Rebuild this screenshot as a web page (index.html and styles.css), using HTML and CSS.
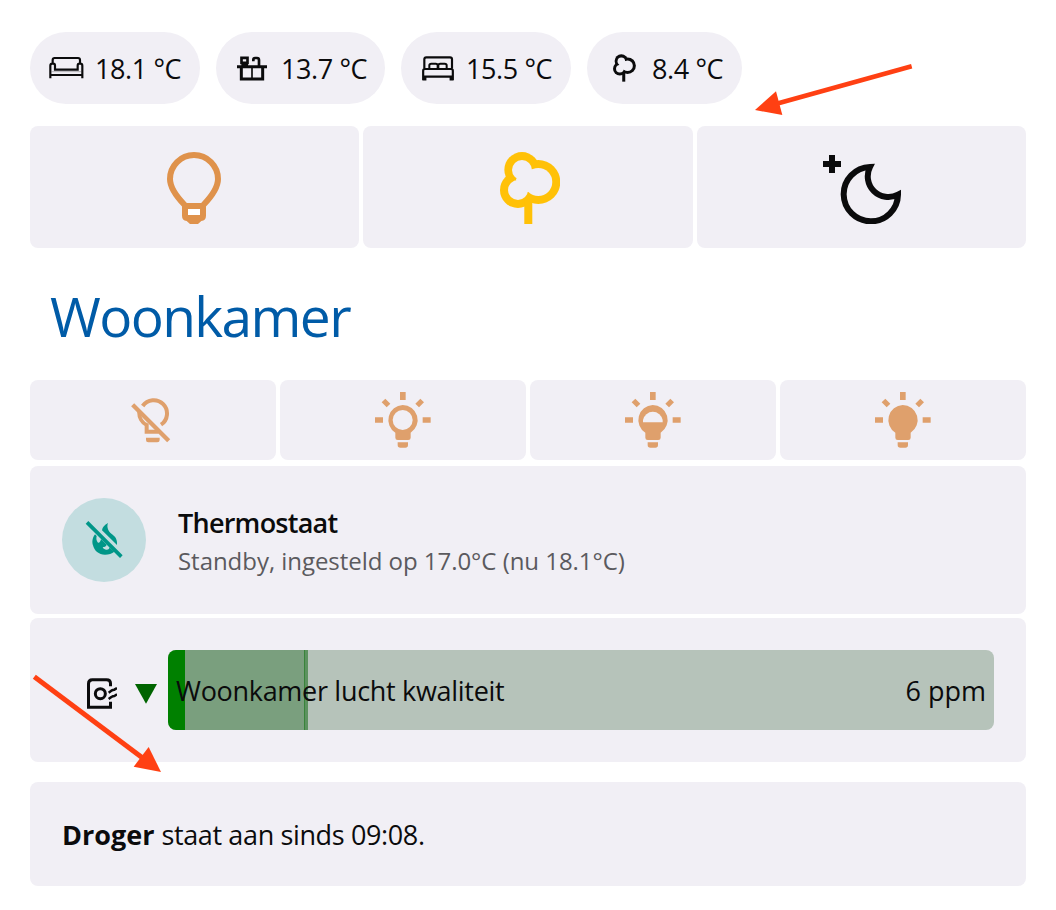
FILE: index.html
```html
<!DOCTYPE html>
<html lang="nl">
<head>
<meta charset="utf-8">
<title>Woonkamer</title>
<link rel="stylesheet" href="styles.css">
</head>
<body>
<svg class="defs" aria-hidden="true">
  <symbol id="tree" viewBox="44 36 182 216">
    <g fill="currentColor"><circle cx="110" cy="89" r="53"/><circle cx="159" cy="126" r="66"/><circle cx="98" cy="150" r="54"/><path d="M117 180h24v72h-24z"/></g>
    <g class="cut"><circle cx="110" cy="90" r="30"/><circle cx="159" cy="126" r="42"/><circle cx="98" cy="150" r="30"/><path d="M110 100L142 88L165 126L128 157L98 150L92 117z"/></g>
  </symbol>
  <symbol id="rays" viewBox="766 51 168 168">
    <path d="M841 51h17v24h-17zM766 127h24v16h-24zM909 127h24v16h-24zM786 82l11-11 15 15-11 11zM902 71l11 11-15 15-11-11zM834 202h31v8q0 8-8 8h-15q-8 0-8-8z"/>
    <path d="M849 90a45 45 0 0 1 24 83v15q0 7-7 7h-32q-7 0-7-7v-15a45 45 0 0 1 22-83z"/>
  </symbol>
</svg>
<main class="dashboard">
  <div class="chips">
    <div class="chip chip-sofa">
      <svg class="icon-sofa" viewBox="86 111 105 72" fill="none" stroke="currentColor" stroke-width="6.500"><path d="M97 134v-11q0-6 6-6h70q6 0 6 6v11M90 178v-38q0-6 6-6h3q5 0 5 6v12h68v-12q0-6 5-6h3q6 0 6 6v38M90 168h96"/><path d="M94 158h88" stroke-width="2" opacity=".4"/></svg>
      <span>18.1 °C</span>
    </div>
    <div class="chip chip-kitchen">
      <svg class="icon-kitchen" viewBox="651 107 90 75" fill="none" stroke="currentColor" stroke-width="9"><path d="M651 139h90M664 139v37h64v-37"/><path d="M664.500 112.500h18v15h-18zM700 123v-5q0-5 5-5h6q6 0 6 6v20M668 130v5h12v-5" stroke-width="8"/><path d="M696 140v36" stroke-width="5"/></svg>
      <span>13.7 °C</span>
    </div>
    <div class="chip chip-bed">
      <svg class="icon-bed" viewBox="96 109 96 75" fill="none" stroke="currentColor" stroke-width="7"><path d="M103 146v-27q0-6 6-6h71q6 0 6 6v27M99.500 182v-29q0-5 5-5h79q5 0 5 5v29M99 171h90M106 171v8h-8M182 171v8h8" stroke-width="6.500"/><path d="M118 146v-9q0-5 6-5h13q6 0 6 5v9M145 146v-9q0-5 6-5h13q6 0 6 5v9" stroke-width="6"/></svg>
      <span>15.5 °C</span>
    </div>
    <div class="chip chip-garden">
      <svg class="icon-garden"><use href="#tree"/></svg>
      <span>8.4 °C</span>
    </div>
  </div>

  <div class="scenes">
    <div class="card scene bulb">
      <svg width="54" height="72" viewBox="51 36 162 216"><path d="M104 195C78 168 60 144 60 117a72 72 0 0 1 144 0C204 144 186 168 160 195" fill="none" stroke="currentColor" stroke-width="18"/><path fill="currentColor" fill-rule="evenodd" d="M96 189h72v38q0 14-14 16l-10 9h-24l-10-9q-14-2-14-16zM114 207v18h36v-18z"/><path d="M114 207h36v18h-36z" fill="#fff"/></svg>
    </div>
    <div class="card scene tree"><svg width="60.600" height="72"><use href="#tree"/></svg></div>
    <div class="card scene night">
      <svg width="78" height="69" viewBox="249 315 234 207"><path fill="currentColor" d="M267 315h18v18h18v18h-18v18h-18v-18h-18v-18h18z"/><path d="M390 351A81.500 81.500 0 1 0 474 434A62 62 0 0 1 390 351z" fill="none" stroke="currentColor" stroke-width="18"/></svg>
    </div>
  </div>

  <h1 class="title">Woonkamer</h1>

  <div class="lights">
    <div class="card light off">
      <svg width="40" height="45" viewBox="34 67 120 135" fill="none" stroke="currentColor" stroke-width="12"><path d="M69 91A40 40 0 1 1 124 147M59 109A40 40 0 0 0 81 148V168H117"/><path d="M39 87L147 195" stroke-width="13"/><path d="M79 186h41v7q0 7-7 7h-27q-7 0-7-7z" fill="currentColor" stroke="none"/></svg>
    </div>
    <div class="card light"><svg width="56" height="56" viewBox="766 51 168 168" fill="currentColor"><use href="#rays" x="766" y="51" width="168" height="168"/><circle class="cut" cx="849" cy="135" r="30"/></svg></div>
    <div class="card light"><svg width="56" height="56" viewBox="766 51 168 168" fill="currentColor"><use href="#rays" x="766" y="51" width="168" height="168"/><path class="cut" d="M820 142v-7a30 30 0 0 1 59 0v7z"/></svg></div>
    <div class="card light"><svg width="56" height="56" viewBox="766 51 168 168" fill="currentColor"><use href="#rays" x="766" y="51" width="168" height="168"/></svg></div>
  </div>

  <div class="card thermostat">
    <div class="badge">
      <svg width="84" height="84" viewBox="126 54 252 252" fill="currentColor"><path d="M264 129C258 144 268 158 278 164C290 173 292 184 291 195L246 151Q248 137 264 129zM225 163C216 174 216 188 219 196C223 213 236 224 255 224Q272 224 283 215L268 202Q269 210 258 209Q249 208 248 201Q258 201 260 194L243 177Q240 190 234 188Q227 180 230 168z"/><path d="M201 127L304 230" fill="none" stroke="currentColor" stroke-width="11"/></svg>
    </div>
    <div class="info"><div class="name">Thermostaat</div><div class="state">Standby, ingesteld op 17.0°C (nu 18.1°C)</div></div>
  </div>

  <div class="card air">
    <svg class="icon-air" width="30" height="31" viewBox="201 114 90 93" fill="none" stroke="currentColor" stroke-width="9"><path d="M271.500 139v-9q0-11-12-11H217q-11.500 0-11.500 12v71h66v-17"/><circle cx="241" cy="161" r="15"/><path d="M266 158l8-6q5-3 9-3l8-5M266 177l8-6q5-3 9-3l8-5" stroke-width="7.500"/></svg>
    <svg class="trend" width="22" height="20" viewBox="344 132 66 60"><path d="M344 132h66l-33 59z" fill="#006400"/></svg>
    <div class="bar"><div class="level"></div><div class="range"></div><div class="peak"></div><div class="bar-text"><span class="bar-label">Woonkamer lucht kwaliteit</span><span class="bar-value">6 ppm</span></div></div>
  </div>

  <div class="card message"><p><b>Droger</b> <span>staat aan sinds 09:08.</span></p></div>

  <svg class="arrow arrow-top" width="190" height="80" viewBox="0 0 570 240"><path d="M515 49L115 160" stroke="#ff4013" stroke-width="14"/><path d="M45 180L108 124L127 195z" fill="#ff4013"/></svg>
  <svg class="arrow arrow-bottom" width="150" height="150" viewBox="0 0 450 450"><path d="M43 110L368 354" stroke="#ff4013" stroke-width="15"/><path d="M423 396L386 321L341 380z" fill="#ff4013"/></svg>
</main>
</body>
</html>
```
FILE: styles.css
```css
* { box-sizing: border-box; }
body { margin: 0; background: #fff; color: #0b0b0c; font-family: "Open Sans", "Noto Sans", sans-serif; font-size: 27px; }
svg { display: block; flex: none; }
.defs { position: absolute; width: 0; height: 0; }
.cut { fill: #f1eff5; }
.dashboard { position: relative; width: 1056px; height: 910px; padding: 32px 30px 0; overflow: hidden; }
.chips { display: flex; gap: 16px; height: 72px; }
.chip { display: flex; align-items: center; height: 72px; border-radius: 36px; background: #f1eff5; line-height: 73px; white-space: nowrap; }
.chip span { letter-spacing: -0.4px; }
.chip-sofa { width: 170px; padding-left: 19px; gap: 11px; }
.chip-kitchen { width: 169px; padding-left: 21px; gap: 14px; }
.chip-bed { width: 170px; padding-left: 21px; gap: 12px; }
.chip-garden { width: 155px; padding-left: 26px; gap: 16px; }
.icon-sofa { width: 35px; height: 24px; }
.icon-kitchen { width: 30px; height: 25px; }
.icon-bed { width: 32px; height: 25px; }
.icon-garden { width: 23px; height: 28px; }
.card { background: #f1eff5; border-radius: 8px; }
.scenes { display: grid; grid-template-columns: repeat(3, 1fr); gap: 4px; height: 122px; margin-top: 22px; }
.scene { display: flex; align-items: center; justify-content: center; padding-top: 2px; }
.bulb { padding-right: 2px; color: #df924b; }
.tree { padding-left: 4px; color: #ffc107; }
.night { padding-top: 5px; padding-left: 2px; color: #0b0b0c; }
.title { height: 132px; margin: 0; padding-left: 20px; color: #005ba7; font-size: 55px; font-weight: 400; letter-spacing: -1.6px; line-height: 136px; }
.lights { display: grid; grid-template-columns: repeat(4, 1fr); gap: 4px; height: 80px; }
.light { display: flex; align-items: center; justify-content: center; color: #dfa06c; }
.off { padding-right: 4px; }
.thermostat { display: flex; align-items: center; gap: 32px; height: 148px; margin-top: 6px; padding: 0 32px; }
.badge { width: 84px; height: 84px; border-radius: 50%; background: #c3dde0; color: #009688; }
.info { padding-top: 4px; }
.name { height: 39px; font-weight: 600; letter-spacing: -0.75px; line-height: 39px; }
.state { height: 39px; color: #5b5a5e; font-size: 24px; letter-spacing: -0.04px; line-height: 38px; }
.air { display: flex; align-items: center; height: 144px; margin-top: 4px; padding: 0 32px 0 57px; }
.icon-air { margin-top: 7px; }
.trend { margin: 7px 11px 0 18px; }
.bar { display: flex; position: relative; width: 826px; height: 80px; overflow: hidden; border-radius: 8px; background: #b6c3ba; }
.level { width: 17px; background: #008000; }
.range { width: 119px; background: #7a9f7e; }
.peak { width: 4px; border-left: 1px solid #38833a; background: #5c925f; }
.bar-text { display: flex; position: absolute; inset: 0; justify-content: space-between; padding: 0 8px; line-height: 81px; }
.bar-label { letter-spacing: -0.3px; }
.message { height: 104px; margin-top: 20px; padding-left: 32px; }
.message p { margin: 0; line-height: 105px; }
.message span { letter-spacing: -0.37px; }
.arrow { position: absolute; }
.arrow-top { left: 740px; top: 50px; }
.arrow-bottom { left: 20px; top: 640px; }
```
